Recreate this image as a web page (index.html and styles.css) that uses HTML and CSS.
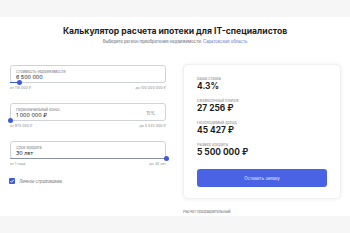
FILE: index.html
```html
<!DOCTYPE html>
<html lang="ru">
<head>
<meta charset="utf-8">
<link rel="stylesheet" href="styles.css">
</head>
<body>
<div class="band"></div>
<main class="page">
  <header class="head">
    <h1 class="title">Калькулятор расчета ипотеки для IT-специалистов</h1>
    <p class="sub">Выберите регион приобретения недвижимости: <a class="region">Саратовская область</a></p>
  </header>
  <div class="grid">
    <section class="form">
      <div class="field">
        <div class="box">
          <div class="label">Стоимость недвижимости</div>
          <div class="value">6 500 000</div>
          <div class="track"><div class="fill" style="width:6%"></div><div class="thumb" style="left:6%"></div></div>
        </div>
        <div class="range"><span>от 116 000 ₽</span><span>до 100 000 000 ₽</span></div>
      </div>
      <div class="field">
        <div class="box">
          <div class="label">Первоначальный взнос</div>
          <div class="value">1 000 000 ₽</div>
          <div class="pct">15%</div>
          <div class="track"><div class="fill" style="width:0%"></div><div class="thumb" style="left:0%"></div></div>
        </div>
        <div class="range"><span>от 975 000 ₽</span><span>до 5 525 000 ₽</span></div>
      </div>
      <div class="field">
        <div class="box">
          <div class="label">Срок кредита</div>
          <div class="value">30 лет</div>
          <div class="track"><div class="fill gray" style="width:100%"></div><div class="thumb" style="left:100%"></div></div>
        </div>
        <div class="range"><span>от 1 года</span><span>до 30 лет</span></div>
      </div>
      <label class="check">
        <span class="cb"><svg viewBox="0 0 6 6" width="6" height="6"><path d="M1.3 3.1 L2.5 4.3 L4.8 1.8" fill="none" stroke="#fff" stroke-width="0.9"/></svg></span>
        <span class="cbl">Личное страхование</span>
      </label>
    </section>
    <section class="side">
      <div class="card">
        <div class="item"><div class="k">Ваша ставка</div><div class="v">4.3%</div></div>
        <div class="item"><div class="k">Ежемесячный платеж</div><div class="v">27 256 ₽</div></div>
        <div class="item"><div class="k">Необходимый доход</div><div class="v">45 427 ₽</div></div>
        <div class="item"><div class="k">Размер кредита</div><div class="v">5 500 000 ₽</div></div>
        <button class="btn">Оставить заявку</button>
      </div>
      <div class="note">Расчет предварительный</div>
    </section>
  </div>
</main>
<div class="band bottom"></div>
</body>
</html>
```
FILE: styles.css
```css
* { box-sizing: border-box; margin: 0; padding: 0; }
html, body { width: 350px; height: 233px; overflow: hidden; background: #fff; }
body { font-family: Inter, "Noto Sans", sans-serif; color: #1c1d22; }
.band { height: 17px; background: #f6f6f7; }
.band.bottom { height: 17px; }
.page { height: 199px; padding-top: 9px; }
.head { text-align: center; }
.title { font-size: 8.6px; font-weight: 700; line-height: 10px; letter-spacing: 0; }
.sub { margin-top: 3px; font-size: 4.2px; line-height: 6px; color: #5f636b; }
.region { color: #5b77c9; }
.grid { display: grid; grid-template-columns: 156px 158px; column-gap: 17px; padding-left: 10px; margin-top: 19px; }
.form { padding-top: 1px; }
.field { margin-bottom: 13px; }
.box { position: relative; height: 18px; border: 1px solid #cfd2d8; border-radius: 3px; padding: 3px 0 0 5px; }
.label { font-size: 3.8px; line-height: 5px; color: #777b84; }
.value { font-size: 5.4px; line-height: 7px; color: #1c1d22; }
.pct { position: absolute; right: 10px; top: 7px; font-size: 4.4px; color: #777b84; }
.track { position: absolute; left: -1px; right: -1px; bottom: -1px; height: 1px; }
.fill { height: 1px; background: #3f5bd8; }
.fill.gray { background: #8a93a3; height: 1.2px; }
.thumb { position: absolute; top: -2px; width: 5px; height: 5px; margin-left: -2.5px; border-radius: 50%; background: #3f5bd8; }
.range { display: flex; justify-content: space-between; margin-top: 3px; font-size: 3.6px; line-height: 4px; color: #8a8e96; }
.check { display: flex; align-items: center; gap: 4px; margin-top: -1px; margin-left: -1px; }
.cb { width: 6px; height: 6px; border-radius: 1px; background: #3f5bd8; display: flex; }
.cbl { font-size: 4.2px; color: #5f636b; font-style: italic; }
.card { height: 135px; border-radius: 5px; background: #fff; box-shadow: 0 0 4px rgba(0,0,0,0.07); border: 1px solid #f0f0f2; padding: 11px 13px 0 13px; }
.item { height: 22px; }
.k { font-size: 3.9px; line-height: 5px; color: #888c94; }
.v { font-size: 8.4px; line-height: 11px; font-weight: 700; color: #1c1d22; }
.btn { display: block; width: 100%; height: 18px; margin-top: 5px; border: none; border-radius: 3px; background: #4a62e4; color: #e8ebff; font-family: inherit; font-size: 4.4px; }
.note { margin-top: 10px; font-size: 3.8px; color: #6c7078; }
```
